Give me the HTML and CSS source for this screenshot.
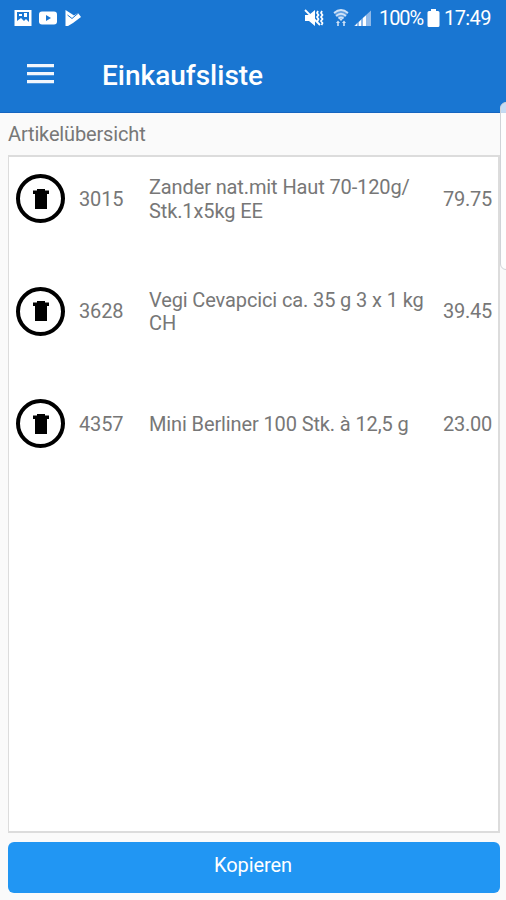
FILE: index.html
```
<!DOCTYPE html>
<html lang="de">
<head>
    <meta charset="UTF-8">
    <meta name="viewport" content="width=device-width, initial-scale=1.0">
    <title>Einkaufsliste</title>
    <link rel="stylesheet" href="styles.css">
</head>
<body>
    <header class="header">
        <div class="status-bar">
            <div class="status-left">
                <svg width="18" height="18" viewBox="0 0 18 18"><path fill="#fff" fill-rule="evenodd" d="M.5 1h17v16H.5zM3 3v9l4-3 3 3 2-2 3 3V3z"/><path fill="#fff" d="M5 5h3v2H5zM10 4h3v4h-3z"/></svg>
                <svg width="18" height="18" viewBox="0 0 18 18"><rect x="0" y="2.5" width="18" height="13" rx="3" fill="#fff"/><path fill="#1976d2" d="M7 6l5 3-5 3z"/></svg>
                <svg width="18" height="18" viewBox="0 0 18 18"><path fill="#fff" d="M1.500 1L7 4.500l3 2L14 4l3 4-8 6-5 3H1.500z"/><path d="M3.500 6l4.500 3.500L14.500 4" fill="none" stroke="#1976d2" stroke-width="1"/></svg>
            </div>
            <div class="status-right">
                <svg width="21" height="20" viewBox="0 0 21 20"><path fill="#fff" d="M1 7h4l6-5v16l-6-5H1z"/><path d="M1 2l15 15" stroke="#fff" stroke-width="1.800"/><path d="M14 3l-1 2 1.500 2-1.500 2 1.500 2-1.500 3M18 3l-1 2 1.500 2-1.500 2 1.500 2-1.500 2 1.500 2-1 2" fill="none" stroke="#fff" stroke-width="1.700"/></svg>
                <svg class="wifi" width="16" height="18" viewBox="0 0 16 18"><path fill="#5f9fe2" d="M1 4q7-6 14 0l-7 8z"/><g fill="none" stroke="#cfe2f7" stroke-width="1.700"><path d="M1 4q7-6 14 0M3 7q5-4.500 10 0M5.500 9.500q2.500-2 5 0"/></g><path fill="#cfe2f7" d="M6.500 10h3L8 12zM3 14l2-2.500L7 14H5.800v3H4.200v-3zM9 14l2-2.500 2 2.500h-1.200v3h-1.600v-3z"/></svg>
                <svg class="signal" width="18" height="18" viewBox="0 0 18 18"><path fill="#8fb9e9" d="M0 17l17-15.500V17z"/><path fill="#fff" d="M1 17l2-2.500V17zM5 17v-4l2-2v6zM9 17V9l3-2.500V17z"/></svg>
                <span class="battery-text">100%</span>
                <svg class="battery" width="13" height="18" viewBox="0 0 13 18"><path fill="#fff" d="M4 0h5v2h2q1.500 0 1.500 1.500v13Q12.500 18 11 18H2Q.5 18 .5 16.500v-13Q.5 2 2 2h2z"/></svg>
                <span class="time">17:49</span>
            </div>
        </div>
        <div class="toolbar">
            <svg class="menu" width="28" height="20" viewBox="0 0 28 20"><path fill="#f2f6fc" d="M0 0h27v3.300H0zM0 8h27v3.300H0zM0 16h27v3.300H0z"/></svg>
            <h1>Einkaufsliste</h1>
        </div>
    </header>

    <main class="content">
        <h2>Artikelübersicht</h2>
        <div class="list">
            <div class="item">
                <button class="delete"><svg width="18" height="22" viewBox="0 0 18 22"><path d="M5 1h8v1.500h4V6h-2v15H3V6H1V2.500h4z"/></svg></button>
                <span class="number">3015</span>
                <span class="name">Zander nat.mit Haut 70-120g/<br>Stk.1x5kg EE</span>
                <span class="price">79.75</span>
            </div>
            <div class="item">
                <button class="delete"><svg width="18" height="22" viewBox="0 0 18 22"><path d="M5 1h8v1.500h4V6h-2v15H3V6H1V2.500h4z"/></svg></button>
                <span class="number">3628</span>
                <span class="name">Vegi Cevapcici ca. 35 g 3 x 1 kg<br>CH</span>
                <span class="price">39.45</span>
            </div>
            <div class="item">
                <button class="delete"><svg width="18" height="22" viewBox="0 0 18 22"><path d="M5 1h8v1.500h4V6h-2v15H3V6H1V2.500h4z"/></svg></button>
                <span class="number">4357</span>
                <span class="name">Mini Berliner 100 Stk. à 12,5 g</span>
                <span class="price">23.00</span>
            </div>
        </div>
        <button class="btn-copy">Kopieren</button>
    </main>

    <div class="edge-handle"></div>
</body>
</html>
```
FILE: styles.css
```
* { margin: 0; padding: 0; box-sizing: border-box; }
body { height: 900px; display: flex; flex-direction: column; background: #fafafa; font-family: Roboto, "Liberation Sans", sans-serif; color: #777; overflow: hidden; }
svg { display: block; flex: none; }
.header { height: 113px; flex: none; background: #1976d2; color: #fff; border-bottom: 1px solid #1565c0; }
.status-bar { height: 36px; display: flex; justify-content: space-between; padding: 0 15px 0 14px; }
.status-left { display: flex; align-items: center; gap: 7px; }
.status-right { display: flex; align-items: center; font-size: 20px; letter-spacing: -1.1px; white-space: nowrap; }
.wifi { margin-left: 8px; }
.signal { margin-left: 5px; }
.battery-text { width: 45px; margin-left: 7px; }
.battery { margin-left: 3px; }
.time { width: 47px; margin-left: 4px; letter-spacing: -0.6px; }
.toolbar { height: 76px; display: flex; align-items: center; padding-left: 27px; }
.menu { margin-right: 47px; }
.toolbar h1 { font-size: 28px; font-weight: 500; line-height: 32px; padding-top: 3px; }
.content { flex: 1; display: flex; flex-direction: column; padding: 0 6px 7px 8px; }
.content h2 { height: 42px; line-height: 43px; font-size: 20px; font-weight: 400; letter-spacing: -0.15px; }
.list { flex: 1; background: #fff; border: 2px solid #dcdcdc; border-left-width: 1px; padding-top: 17px; }
.item { height: 49px; margin-bottom: 63.5px; display: flex; align-items: center; font-size: 20px; line-height: 23.500px; letter-spacing: -0.12px; padding: 0 6px 0 7px; white-space: nowrap; }
.delete { width: 49px; height: 49px; flex: none; display: flex; align-items: center; justify-content: center; background: #fff; border: 4px solid #000; border-radius: 50%; }
.number { width: 70px; margin-left: 14px; padding-top: 2px; }
.name { flex: 1; padding-top: 2px; }
.price { text-align: right; padding-top: 2px; letter-spacing: -0.25px; }
.btn-copy { height: 51px; margin-top: 9px; flex: none; border: none; border-radius: 6px; background: #2196f3; color: #fff; font-family: inherit; font-size: 20px; letter-spacing: -0.1px; padding: 0 2px 5px 0; }
.edge-handle { position: absolute; left: 500px; top: 102px; width: 10px; height: 168px; background: rgba(255,255,255,0.75); border: 1px solid #d0d4d8; border-radius: 6px 0 0 6px; }
```
